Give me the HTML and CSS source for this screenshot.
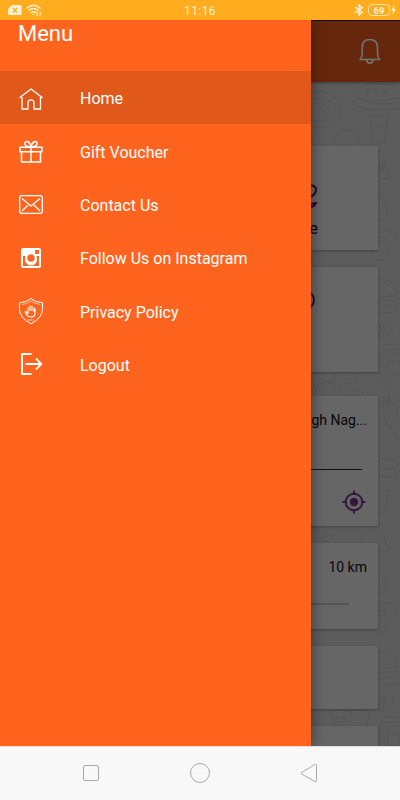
FILE: index.html
```html
<!DOCTYPE html>
<html lang="en">
<head>
<meta charset="utf-8">
<title>Menu</title>
<link rel="stylesheet" href="styles.css">
</head>
<body>
<div class="phone">
  <header class="status">
    <div class="status-left">
      <svg width="14" height="10" viewBox="0 0 14 10"><path d="M4 0h8q1.500 0 1.500 1.500v7q0 1.500-1.500 1.500H1.500Q0 10 0 8.500V4z" fill="#fff0d2"/><path d="M5 3l4 4.500M9 3L5 7.500" stroke="#ffac1e" stroke-width="1.300"/></svg>
      <svg width="17" height="13" viewBox="0 0 17 13" fill="none" stroke="#fff0d2" stroke-width="1.400"><path d="M.6 4.500Q7.500-2 14.400 4.500M2.600 6.800q4.900-4.400 9.800 0M4.700 9q2.800-2.400 5.600 0"/><path d="M6 9.800h3L7.500 11.500z" fill="#fff0d2" stroke="none"/><path d="M11.500 7.500V12M10.300 10.500l1.200 1.500M14 12.500V8l1.500 1.700" stroke-width="1"/></svg>
    </div>
    <time class="clock">11:16</time>
    <div class="status-right">
      <svg width="10" height="12" viewBox="0 0 10 12" fill="none" stroke="#fff0d2" stroke-width="1.500"><path d="M1 3.200l7.200 5L5 11V1l3.200 2.800L1 8.800"/></svg>
      <span class="battery">69</span>
      <svg class="bolt" width="5" height="10" viewBox="0 0 5 10"><path d="M3.500 0L0 5.600h2L1.500 10 5 4.200H3z" fill="#fff0d2"/></svg>
    </div>
  </header>

  <div class="stage">
    <div class="page">
      <div class="appbar">
        <svg width="22" height="27" viewBox="0 0 22 27" fill="none" stroke="#737373" stroke-width="1.600" stroke-linejoin="round"><path d="M1 21.500c1.700-1.500 2.200-3 2.200-6V9.500C3.200 4 6 1.500 10.800 1.500s7.700 2.500 7.700 8v6c0 3 .5 4.500 2.200 6z"/><path d="M7.800 22c0 4.200 6 4.200 6 0"/></svg>
      </div>
      <div class="content">
        <svg class="doodles" width="89" height="664" viewBox="311 82 89 664" fill="none" stroke="#555" stroke-width="1">
          <ellipse cx="319" cy="110" rx="22" ry="18"/><ellipse cx="319" cy="110" rx="16" ry="12"/><path d="M312 99q11 9 15 21M317 98q9 7 14 16"/>
          <path d="M351 98q-3-4 4-6 9-11 26-9 13 1 19 8M351 98q3 9 17 12l32-2M354 94q10 11 46 4M357 99q18 8 43 3"/><circle cx="368" cy="92" r="1.500"/><circle cx="376" cy="90" r="1.500"/><circle cx="385" cy="92" r="1.500"/>
          <path d="M370 116h18l-3 26q-5 4-12 0zM371 124q7 3 16 0M372 129q7-4 14 0"/>
          <path d="M333 145q2-15 14-15t12 15"/>
          <path d="M378 150q6 5 6 14l5 14-11 2M378 166q6-3 6 0"/><circle cx="381" cy="169" r="2.500"/>
          <path d="M378 197q10 3 9 14t-9 9M379 198v-6"/>
          <path d="M378 233q8-6 17-1 6 6-1 10-6 4-8 14-4 8-11 2-2-6-5-7"/><ellipse cx="381" cy="239" rx="4" ry="3"/>
          <g id="snacks"><path d="M378 280q13-3 18 9 3 4 0 6l-18 3M378 302q10-4 20 0v10l-20 1M378 307l20-2"/><ellipse cx="389" cy="329" rx="4" ry="5"/><ellipse cx="381" cy="335" rx="3" ry="4"/><ellipse cx="382" cy="326" rx="2" ry="3"/><path d="M400 345h-16l-4 8v27l5 4h15M384 350h16M384 350v29M388 354h12v20h-12zM388 364q6-6 12 0"/></g>
          <path d="M316 394q-2-10 8-12 9 0 11-7 1 11-2 19M321 391q4-8 12-9M340 390q0-8 8-7 4 8 9 6v5q-10 5-17-4M345 383l2 9M352 374q3-6 6-1-1 8-4 7M362 395q2-7 8 0"/>
          <path d="M389 390v20M380 395l17 12M381 407l16-13M378 401h21M383 404q12-2 15 4-1 10-6 15l-1 6q-8-10-8-25"/>
          <path d="M378 420q13 4 20 18M378 461q12-5 20 2 3 7-20 6M378 475q14 5 20-2M380 490h8l-3 22q-3 3-7 1"/>
          <path d="M325 532l3 3q4-3 4 1l-5 5 3 3q-4 2-5-2l-4-1q0-4 3-4zM360 542q3-14 17-10l9 10M378 530q7 2 7 11l4 10h-11"/>
          <path d="M378 573q10 4 9 13t-9 7M378 606q13-7 18 1 3 5-3 9-5 4-7 13-4 8-8 2"/><ellipse cx="382" cy="613" rx="4" ry="3"/>
          <use href="#snacks" y="372"/>
          <path d="M331 710q1 14 7 16M330 710h38M334 722h14l4-12M368 710q2 7-1 16"/><circle cx="338" cy="717" r="1.500"/><circle cx="344" cy="718" r="1.500"/>
        </svg>
        <section class="card card-dine">
          <svg class="dine-icon" width="10" height="26" viewBox="0 0 10 26" fill="none" stroke="#220b38" stroke-width="2"><path d="M0 1.500q5 0 5 4.500 0 3.500-5 7M0 20q4-1 5-1-1 3-5 4"/></svg>
          <span class="dine-label">Dine</span>
        </section>
        <section class="card card-pick">
          <svg width="20" height="20" viewBox="0 0 20 20"><circle cx="10" cy="10" r="9" fill="none" stroke="#220b38" stroke-width="1.800"/></svg>
        </section>
        <section class="card card-place">
          <div class="place">Singh Nag...</div>
          <div class="rule"></div>
          <svg class="locate" width="24" height="24" viewBox="0 0 24 24" fill="none" stroke="#32173f" stroke-width="2"><circle cx="12" cy="12" r="8.300"/><circle cx="12" cy="12" r="4.200" fill="#32173f" stroke="none"/><path d="M12 .5V4M12 20v3.500M.5 12H4M20 12h3.500"/></svg>
        </section>
        <section class="card card-range">
          <div>10 km</div>
          <div class="track"></div>
        </section>
        <section class="card card-plain"></section>
        <section class="card card-last"></section>
      </div>
    </div>

    <aside class="drawer">
      <h1>Menu</h1>
      <nav>
        <a class="item active">
          <svg viewBox="0 0 26 26"><path d="M1.500 12.800L13 4l11.500 8.800M4 12v12h6v-6.200c0-4 6-4 6 0V24h6.500V12"/></svg>Home</a>
        <a class="item">
          <svg viewBox="0 0 26 26"><path d="M2 9.200h22v4.500H2zM3.500 13.700h19V24h-19zM13 9.200V24M13 9C9 9 6.500 7.500 6.800 5.200 7.500 2 12 3.200 13 9c1-5.800 5.500-7 6.200-3.800C19.500 7.500 17 9 13 9" stroke-width="1.500"/></svg>Gift Voucher</a>
        <a class="item">
          <svg viewBox="0 0 26 26"><rect x="1.700" y="4.700" width="22.600" height="17.600" rx="2"/><path d="M4 7.500l9 7.500L22 7.500M4 20l6-6M22 20l-6-6"/></svg>Contact Us</a>
        <a class="item">
          <svg viewBox="0 0 26 26"><path d="M5 3h16q2 0 2 2v16q0 2-2 2H5q-2 0-2-2V5q0-2 2-2z" fill="#fff" stroke="none"/><path d="M17 5h4v4h-4zM5 11h3.200a6 6 0 1 0 9.800 0H21v10H5z" fill="#ff641e" stroke="none"/><circle cx="13" cy="13" r="4.800" fill="#ff641e" stroke="#fff" stroke-width="2.200"/></svg>Follow Us on Instagram</a>
        <a class="item">
          <svg viewBox="0 0 26 26"><path d="M13 .5q4.500 4 11.500 4.200v7Q24 20 13 25.800 2 20 1.500 11.700v-7Q8.500 4.500 13 .5z" stroke-width="1"/><path d="M13 3q4 3 9.300 3.500M13 3q-4 3-9.300 3.500" stroke-width=".6"/><path d="M10 15.500V9.200M12 13V7.500M14 13V8M16 14V9.500M10 12.500v3l-2-2q-1.500 0 0 2.200 2 3.300 5 3.300 4 0 4-4v-4.500" stroke-width="1.100"/><path d="M10 22h6" stroke-width="1" stroke-dasharray="1.500 .8"/></svg>Privacy Policy</a>
        <a class="item">
          <svg viewBox="0 0 26 26"><path d="M13.500 3H4v20h9.500M7.500 13H23M18 7.700l5.300 5.300-5.300 5.300" stroke-width="1.900"/></svg>Logout</a>
      </nav>
    </aside>
  </div>

  <footer class="sysnav">
    <svg width="18" height="20" viewBox="0 0 18 20"><rect x="1.500" y="2.500" width="15" height="15" rx="1.500"/></svg>
    <svg width="20" height="20" viewBox="0 0 20 20"><circle cx="10" cy="10" r="9.500"/></svg>
    <svg width="18" height="20" viewBox="0 0 18 20"><path d="M15 1.500q1.500-.5 1.500 1v15.300q0 1.500-1.500.8L1.500 11q-1-.8 0-1.500z"/></svg>
  </footer>
</div>
</body>
</html>
```
FILE: styles.css
```css
* { box-sizing: border-box; }

body {
  margin: 0;
  font-family: Roboto, "Liberation Sans", sans-serif;
}

svg { display: block; flex: none; }

.phone {
  width: 400px;
  height: 800px;
  display: grid;
  grid-template-rows: 20px 726px 54px;
  overflow: hidden;
}

.status {
  display: grid;
  grid-template-columns: 1fr auto 1fr;
  align-items: center;
  padding: 0 4px 0 8px;
  background: #ffac1e;
  color: #fff0d2;
}

.status-left { display: flex; align-items: center; gap: 4px; }

.clock {
  font-size: 12px;
  letter-spacing: 0.4px;
  padding: 2px 4px 0 0;
}

.status-right {
  display: flex;
  align-items: center;
  justify-content: flex-end;
}

.battery {
  width: 22px;
  height: 12px;
  margin-left: 4px;
  border: 1px solid #ffe0a5;
  border-radius: 4px;
  font-size: 9.5px;
  font-weight: 700;
  line-height: 11px;
  text-align: center;
}

.bolt { margin-left: 1px; }

.stage { position: relative; overflow: hidden; }

.page { height: 100%; background: #5c5c5c; }

.appbar {
  height: 62px;
  display: flex;
  justify-content: flex-end;
  align-items: center;
  padding-right: 19px;
  border-top: 1px solid #170a04;
  background: #66280c;
  position: relative;
  box-shadow: 0 1px 3px rgba(0, 0, 0, 0.3);
  z-index: 1;
}

.content {
  position: relative;
  height: 664px;
  padding: 64px 22px 0;
}

.doodles { position: absolute; top: 0; right: 0; }

.card {
  position: relative;
  background: #666;
  border-radius: 1px;
  box-shadow: 0 1px 3px rgba(0, 0, 0, 0.3);
  color: #060606;
  font-size: 14px;
  line-height: 18px;
}

.card-dine {
  height: 104px;
  margin-bottom: 17px;
  padding: 38px 60px 0 0;
  display: flex;
  flex-direction: column;
  align-items: flex-end;
}

.dine-icon { margin-right: -3px; }

.dine-label { font-size: 16px; margin-top: 10px; }

.card-pick {
  height: 105px;
  margin-bottom: 24px;
  padding: 23px 63px 0 0;
  display: flex;
  justify-content: flex-end;
}

.card-place {
  height: 130px;
  margin-bottom: 17px;
  padding: 15px 11px 0;
  text-align: right;
}

.place { height: 58px; }

.rule {
  height: 1px;
  margin-right: 5px;
  background: #101010;
}

.locate { margin: 20px 1px 0 auto; }

.card-range {
  height: 86px;
  margin-bottom: 17px;
  padding: 15px 11px 0;
  text-align: right;
}

.track {
  height: 2px;
  margin: 27px 18px 0 0;
  background: #545454;
}

.card-plain { height: 63px; margin-bottom: 17px; }

.card-last { height: 20px; }

.drawer {
  position: absolute;
  z-index: 2;
  top: 0;
  left: 0;
  width: 311px;
  height: 726px;
  background: #ff641e;
  color: #fff;
  box-shadow: 0 0 14px rgba(0, 0, 0, 0.45);
}

h1 {
  height: 51px;
  margin: 0;
  padding-left: 18px;
  font-size: 22px;
  font-weight: 400;
  line-height: 28px;
}

.item {
  height: 53.35px;
  display: flex;
  align-items: center;
  gap: 36px;
  padding: 2px 0 0 18px;
  font-size: 16px;
}

.item svg {
  width: 26px;
  height: 26px;
  margin-bottom: 2px;
  fill: none;
  stroke: #fff;
  stroke-width: 1.3;
  stroke-linejoin: round;
}

.active { background: #e0581a; }

.sysnav {
  display: flex;
  align-items: center;
  justify-content: space-between;
  padding: 0 82px 1px;
  background: #f8f8f8;
  border-top: 1px solid #dedede;
}

.sysnav svg { fill: none; stroke: #a8a8a8; stroke-width: 1; }
```
